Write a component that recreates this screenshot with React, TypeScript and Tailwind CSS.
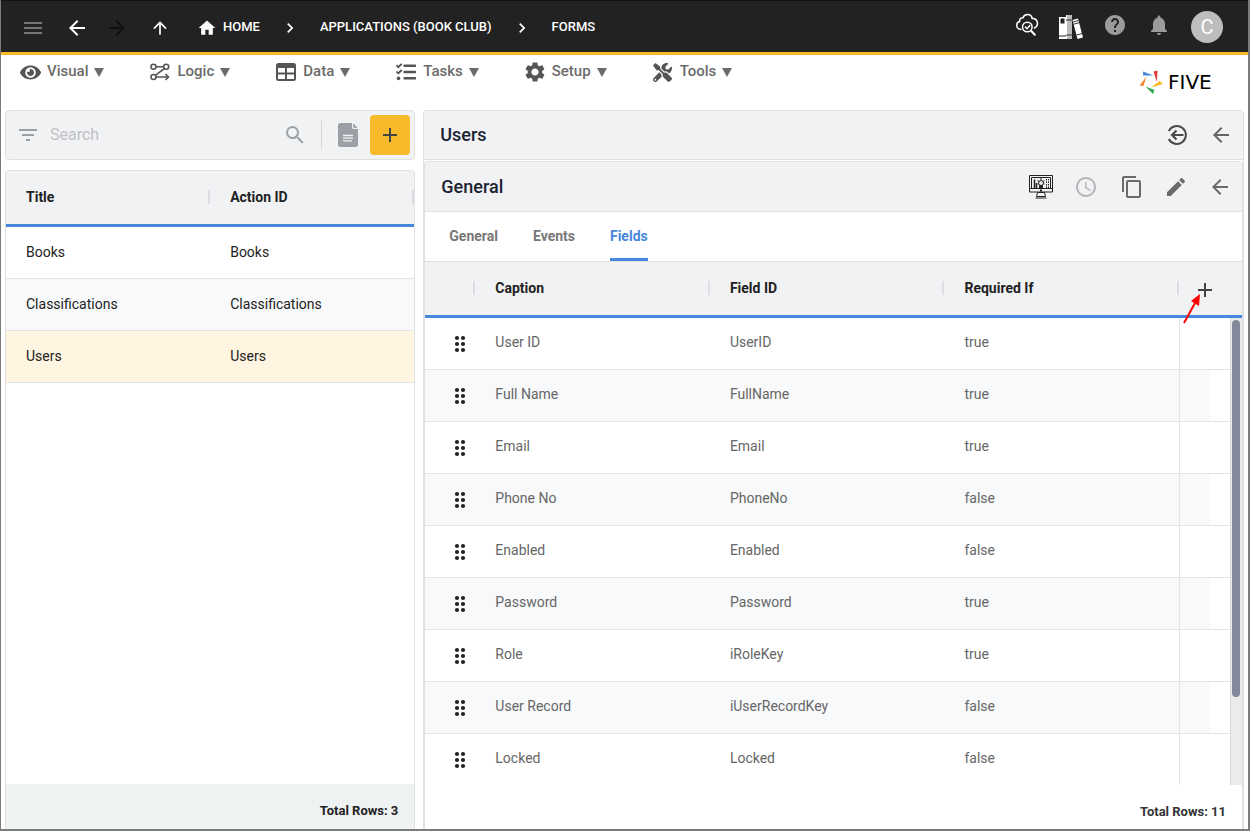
import React from 'react';
import {
  MdAccessTime,
  MdAdd,
  MdArrowBack,
  MdArrowForward,
  MdArrowUpward,
  MdChevronRight,
  MdContentCopy,
  MdEdit,
  MdFilterList,
  MdHelp,
  MdHome,
  MdMenu,
  MdNotifications,
  MdSearch,
  MdSettings,
} from 'react-icons/md';
import { FaEye, FaTasks, FaTools } from 'react-icons/fa';

const forms = ['Books', 'Classifications', 'Users'];

const fields = [
  { caption: 'User ID', id: 'UserID', required: 'true' },
  { caption: 'Full Name', id: 'FullName', required: 'true' },
  { caption: 'Email', id: 'Email', required: 'true' },
  { caption: 'Phone No', id: 'PhoneNo', required: 'false' },
  { caption: 'Enabled', id: 'Enabled', required: 'false' },
  { caption: 'Password', id: 'Password', required: 'true' },
  { caption: 'Role', id: 'iRoleKey', required: 'true' },
  { caption: 'User Record', id: 'iUserRecordKey', required: 'false' },
  { caption: 'Locked', id: 'Locked', required: 'false' },
];

export default function App() {
  return (
    <div className="flex h-screen flex-col overflow-hidden border-r-2 border-b-2 border-l border-[#7b7b7b] bg-white font-['Roboto','Liberation_Sans',sans-serif] text-sm text-[#222]">
      <TopBar />
      <MenuBar />
      <main className="grid min-h-0 flex-1 grid-cols-[1fr_2fr] gap-2 px-1">
        <FormList />
        <FormDetail />
      </main>
    </div>
  );
}

const TopBar = () => (
  <header className="-mx-px flex h-[55px] shrink-0 items-center justify-between border-t border-b-3 border-t-[#111] border-b-[#fbb829] bg-[#222] pr-[26px] pl-[21px] text-white">
    <nav className="flex items-center pt-0.5 text-[13px] font-medium" aria-label="Breadcrumb">
      <button aria-label="Menu" className="text-[#777]"><MdMenu size={24} /></button>
      <button aria-label="Back" className="ml-5"><MdArrowBack size={24} /></button>
      <button aria-label="Forward" className="ml-4 text-[#111]"><MdArrowForward size={24} /></button>
      <button aria-label="Up" className="ml-[21px]"><MdArrowUpward size={20} /></button>
      <a href="#home" className="ml-[27px] flex items-center gap-1.5"><MdHome size={20} />HOME</a>
      <MdChevronRight size={20} className="mx-5" />
      <a href="#applications">APPLICATIONS (BOOK CLUB)</a>
      <MdChevronRight size={20} className="mx-5" />
      <a href="#forms">FORMS</a>
    </nav>
    <div className="flex items-center gap-5">
      <button aria-label="Inspect" className="pb-1"><CloudSearchIcon /></button>
      <button aria-label="Library"><BooksIcon /></button>
      <button aria-label="Help" className="pb-1 text-[#9b9b9b]"><MdHelp size={24} /></button>
      <button aria-label="Notifications" className="pb-1 text-[#9b9b9b]"><MdNotifications size={24} /></button>
      <button className="size-8 rounded-full bg-[#bdbdbd] text-xl leading-8">C</button>
    </div>
  </header>
);

const MenuBar = () => (
  <div className="flex h-[55px] shrink-0 items-start justify-between pr-[22px] pl-[19px]">
    <nav className="flex gap-[46px] pt-[5px]" aria-label="Main">
      <MenuItem label="Visual" icon={<FaEye size={21} />} />
      <MenuItem label="Logic" icon={<LogicIcon />} />
      <MenuItem label="Data" icon={<DataIcon />} />
      <MenuItem label="Tasks" icon={<FaTasks size={20} />} />
      <MenuItem label="Setup" icon={<MdSettings size={24} />} />
      <MenuItem label="Tools" icon={<FaTools size={19} />} />
    </nav>
    <FiveLogo />
  </div>
);

const MenuItem = ({ label, icon }: { label: string; icon: React.ReactNode }) => (
  <button className="flex h-6 items-center text-[15px] font-medium text-[#6b6b6b]">
    <span className="mr-[7px] flex w-5 justify-center text-[#555] *:shrink-0">{icon}</span>
    {label}
    <svg width="10" height="9" viewBox="0 0 10 9" className="ml-1.5" fill="currentColor" aria-hidden="true">
      <path d="M0 0h10L5 9z" />
    </svg>
  </button>
);

const FormList = () => (
  <section className="flex min-h-0 min-w-0 flex-col gap-2.5">
    <div className="flex h-[50px] shrink-0 items-center rounded border border-[#dfe0e1] bg-[#f1f2f4] pr-1 pl-2.5 text-[#9aa0a6]">
      <MdFilterList size={24} />
      <input
        type="search"
        aria-label="Search"
        placeholder="Search"
        className="ml-2.5 min-w-0 flex-1 text-base outline-none placeholder:text-[#bfc1c4]"
      />
      <button aria-label="Search forms"><MdSearch size={24} /></button>
      <span className="mr-4 ml-3.5 h-7 w-px bg-[#d3d5d7]" />
      <button aria-label="Notes"><NoteIcon /></button>
      <button aria-label="Add form" className="ml-3 flex size-10 items-center justify-center rounded bg-[#f8b92b] text-[#444]">
        <MdAdd size={24} />
      </button>
    </div>

    <div className="flex min-h-0 flex-1 flex-col overflow-hidden rounded-t border border-b-0 border-[#dfe0e1]">
      <table className="w-full table-fixed border-separate border-spacing-0 text-left">
        <thead className="bg-[#f1f2f4]">
          <tr className="h-14">
            <HeaderCell>Title</HeaderCell>
            <HeaderCell>Action ID</HeaderCell>
          </tr>
        </thead>
        <tbody>
          {forms.map((name) => (
            <tr key={name} className={`h-[52px] ${name === 'Users' ? 'bg-[#fff5e1]' : 'even:bg-[#f8f9fa]'}`}>
              <td className="border-b border-[#e3e4e5] px-5 pb-0.5">{name}</td>
              <td className="border-b border-[#e3e4e5] px-5 pb-0.5">{name}</td>
            </tr>
          ))}
        </tbody>
      </table>
      <footer className="mt-auto flex h-[45px] justify-end bg-[#eff2f3] pt-[18px] pr-4 text-[13px] font-bold">
        Total Rows: 3
      </footer>
    </div>
  </section>
);

const FormDetail = () => (
  <section className="flex min-h-0 min-w-0 flex-col rounded-t border border-b-0 border-[#dfe0e1]">
    <div className="flex h-[49px] shrink-0 items-center justify-between border-b border-[#dfe0e1] bg-[#f1f2f4] pr-2.5 pl-4">
      <h1 className="text-lg font-medium text-[#1b2233]">Users</h1>
      <div className="flex items-center gap-5 text-[#666]">
        <button aria-label="Return"><ReturnIcon /></button>
        <button aria-label="Back"><MdArrowBack size={24} /></button>
      </div>
    </div>

    <div className="mt-px flex min-h-0 flex-1 flex-col overflow-hidden rounded-t border border-b-0 border-[#dfe0e1]">
      <div className="flex h-[50px] shrink-0 items-center justify-between border-b border-[#dfe0e1] bg-[#f1f2f4] pr-2.5 pl-4">
        <h2 className="text-lg font-medium text-[#1b2233]">General</h2>
        <div className="flex items-center gap-5 text-[#6a6a6a]">
          <button aria-label="Preview"><MonitorIcon /></button>
          <button aria-label="History" className="text-[#b5b6b8]"><MdAccessTime size={24} /></button>
          <button aria-label="Copy" className="ml-0.5"><MdContentCopy size={24} /></button>
          <button aria-label="Edit"><MdEdit size={24} /></button>
          <button aria-label="Close"><MdArrowBack size={24} /></button>
        </div>
      </div>

      <div role="tablist" className="flex h-[50px] shrink-0 gap-[35px] border-b border-[#dfe0e1] px-6 font-bold text-[#777]">
        <button role="tab" aria-selected="false" className="pb-0.5">General</button>
        <button role="tab" aria-selected="false" className="pb-0.5">Events</button>
        <button role="tab" aria-selected="true" className="rounded-t-xs border-b-3 border-[#4688db] pt-px text-[#4688db]">
          Fields
        </button>
      </div>

      <FieldsTable />

      <footer className="flex h-11 shrink-0 justify-end pt-[18px] pr-4 text-[13px] font-bold text-[#333]">
        Total Rows: 11
      </footer>
    </div>
  </section>
);

const FieldsTable = () => (
  <div className="relative min-h-0 flex-1 overflow-hidden">
    <table className="w-full table-fixed border-separate border-spacing-0 text-left">
      <colgroup>
        <col className="w-[50px]" />
        <col />
        <col />
        <col />
        <col className="w-[31px]" />
        <col className="w-8" />
      </colgroup>
      <thead className="bg-[#f1f2f4]">
        <tr className="h-14">
          <HeaderCell />
          <HeaderCell>Caption</HeaderCell>
          <HeaderCell>Field ID</HeaderCell>
          <HeaderCell>Required If</HeaderCell>
          <th colSpan={2} className="border-b-3 border-[#4688db] p-0 pt-0.5">
            <button aria-label="Add field" className="relative ml-3.5 block text-[#444]">
              <MdAdd size={24} />
              {/* pointer to the add button */}
              <svg className="absolute top-4 -left-2.5" width="18" height="30" viewBox="0 0 18 30" aria-hidden="true">
                <path d="M1 29 12 9" stroke="#f00" strokeWidth="2" />
                <path d="M17 0 16 12 8 7z" fill="#f00" />
              </svg>
            </button>
          </th>
        </tr>
      </thead>
      <tbody className="text-[#666]">
        {fields.map((field) => (
          <tr key={field.id} className="group h-[52px]">
            <td className="border-b border-[#e3e4e5] p-0 group-even:bg-[#f8f9fa]">
              <button aria-label={`Move ${field.caption}`} className="ml-[29px] block"><DragIcon /></button>
            </td>
            <td className="border-b border-[#e3e4e5] px-5 pb-1 group-even:bg-[#f8f9fa]">{field.caption}</td>
            <td className="border-b border-[#e3e4e5] px-5 pb-1 group-even:bg-[#f8f9fa]">{field.id}</td>
            <td className="border-b border-[#e3e4e5] px-5 pb-1 group-even:bg-[#f8f9fa]">{field.required}</td>
            <td className="border-b border-l border-[#e3e4e5] p-0 group-even:bg-[#f8f9fa]" />
            <td className="border-b border-[#e3e4e5] p-0" />
          </tr>
        ))}
      </tbody>
    </table>
    <div className="absolute top-14 right-0 bottom-0 w-3 border-l border-[#d8d8d8] bg-[#ebebeb] pt-0.5">
      <div className="mx-px h-[81%] w-2 rounded-full bg-[#838a9b]" />
    </div>
  </div>
);

const HeaderCell = ({ children }: { children?: React.ReactNode }) => (
  <th className="border-b-3 border-[#4688db] p-0 pb-0.5 font-bold">
    <div className="flex items-center justify-between pl-5">
      <span>{children}</span>
      <span className="h-3.5 w-0.5 bg-[#dcdde0]" />
    </div>
  </th>
);

// --- Icons ---

const DragIcon = () => (
  <svg width="12" height="18" viewBox="0 0 12 18" fill="#222" aria-hidden="true">
    <circle cx="3" cy="3" r="2.1" />
    <circle cx="9" cy="3" r="2.1" />
    <circle cx="3" cy="9" r="2.1" />
    <circle cx="9" cy="9" r="2.1" />
    <circle cx="3" cy="15" r="2.1" />
    <circle cx="9" cy="15" r="2.1" />
  </svg>
);

const CloudSearchIcon = () => (
  <svg width="24" height="24" viewBox="0 0 24 24" fill="none" stroke="#fff" strokeWidth="1.5" strokeLinecap="round" aria-hidden="true">
    <path d="M6 16.500C3.500 16.500 1.700 14.600 1.700 12.300c0-2 1.300-3.400 3-3.800C4.300 6 6 4.500 8 4.700 8.700 2.700 10.400 1.500 12.500 1.500c2.600 0 4.300 1.700 4.700 4 2.900-.4 5.300 1.900 5.300 4.800 0 2.200-1.200 4-3 4.700" />
    <circle cx="12.300" cy="14" r="4.800" />
    <path d="m10.300 14 1.700 1.700 2.800-3.200" />
    <path d="m16 17.800 3.800 4" strokeWidth="2" />
  </svg>
);

const BooksIcon = () => (
  <svg width="24" height="26" viewBox="0 0 24 26" aria-hidden="true">
    <path d="M0 3h7v22H0z" fill="#fff" />
    <path d="M1.500 4.500h4v5h-4zM0 21.500h7v1H0z" fill="#222" />
    <path d="M7 1h6v24H7z" fill="#bbb" />
    <path d="M7 1h1v24H7z" fill="#fff" />
    <path d="M7 5.500h6v1H7zM7 20.500h6v1H7z" fill="#333" />
    <path d="m13.500 6 5.500-1.500 5 19L18.500 25z" fill="#fff" />
    <path d="m14.100 8 5.400-1.500M14.700 10.200l5.400-1.500M17.600 21l5.500-1.500" stroke="#333" />
  </svg>
);

const LogicIcon = () => (
  <svg width="20" height="18" viewBox="0 0 20 18" fill="none" stroke="currentColor" strokeWidth="1.600" aria-hidden="true">
    <circle cx="3.500" cy="3.700" r="2.500" />
    <circle cx="16.200" cy="3.700" r="2.500" />
    <circle cx="3.500" cy="14" r="2.500" />
    <path d="M6 3.700h7.700M14.500 5.500 5.300 12.300M6 14h12M15.500 11l3 3-3 3" />
  </svg>
);

const DataIcon = () => (
  <svg width="20" height="18" viewBox="0 0 20 18" fill="none" stroke="currentColor" strokeWidth="2" aria-hidden="true">
    <rect x="1" y="1" width="18" height="16" rx="1.500" />
    <path d="M1 3h18" strokeWidth="4" />
    <path d="M10 4v13M1 10.500h18" />
  </svg>
);

const NoteIcon = () => (
  <svg width="20" height="24" viewBox="0 0 20 24" fill="#9aa0a6" aria-hidden="true">
    <path d="M2.500 0H14v4.500c0 .8.700 1.500 1.500 1.500H20v15.500c0 1.400-1.100 2.500-2.500 2.500h-15A2.500 2.500 0 0 1 0 21.500v-19C0 1.100 1.100 0 2.500 0z" />
    <path d="M15.200.300 19.700 4.800h-4.500z" />
    <path d="M5 12.500h10M5 15.200h10M5 17.900h9" stroke="#f1f2f4" strokeWidth="1.300" />
  </svg>
);

const ReturnIcon = () => (
  <svg width="24" height="24" viewBox="0 0 24 24" fill="none" stroke="#4a4a4a" strokeWidth="2" aria-hidden="true">
    <path d="M3.800 8a9 9 0 1 1 0 8" />
    <path d="M18.500 12H7M11.500 7.500 7 12l4.500 4.500" strokeWidth="2.200" />
  </svg>
);

const MonitorIcon = () => (
  <svg width="26" height="26" viewBox="0 0 26 26" fill="none" stroke="#222" aria-hidden="true">
    <path d="M1.500 1.500h23v16.500h-23zM3.500 3.500h19v11h-19z" />
    <path d="M1.500 14.500h23" />
    <path d="M9.500 18.500h7l1 4h-9zM7.500 24h11" />
    <path d="M12 16.500h2" strokeWidth="1.800" />
    <circle cx="13" cy="9" r="2.500" />
    <path d="M13 4v2.500M9.500 6.500l1.700 1.200M16.500 6.500l-1.700 1.200M9.500 10h1M15.500 10h1" />
    <path d="M11.500 11.500h3v3h-3z" fill="#222" />
    <path d="M6.500 5.500V14M8.500 9v5" strokeWidth="1.500" />
    <path d="M18.500 5v9M20.500 5v9" strokeDasharray="1.500 1" />
  </svg>
);

const FiveLogo = () => (
  <a href="#five" aria-label="Five" className="flex items-center gap-[5px] pt-[15px] text-black">
    <svg width="24" height="24" viewBox="0 0 24 24" aria-hidden="true">
      <path d="M4 1.500V5.500h10.500z" fill="#4688db" />
      <path d="M14.500 1.500 18.500.500 17.800 12z" fill="#e5383b" />
      <path d="M7.500 6.500 .5 15.500 4.500 16z" fill="#f58634" />
      <path d="M20.500 11 24 14 12 17.500z" fill="#fbb829" />
      <path d="m6.500 16.500 7.500 7.500 1.500-4z" fill="#34a853" />
    </svg>
    <span className="w-[58px] font-['DejaVu_Sans',sans-serif] text-xl leading-6">FIVE</span>
  </a>
);
